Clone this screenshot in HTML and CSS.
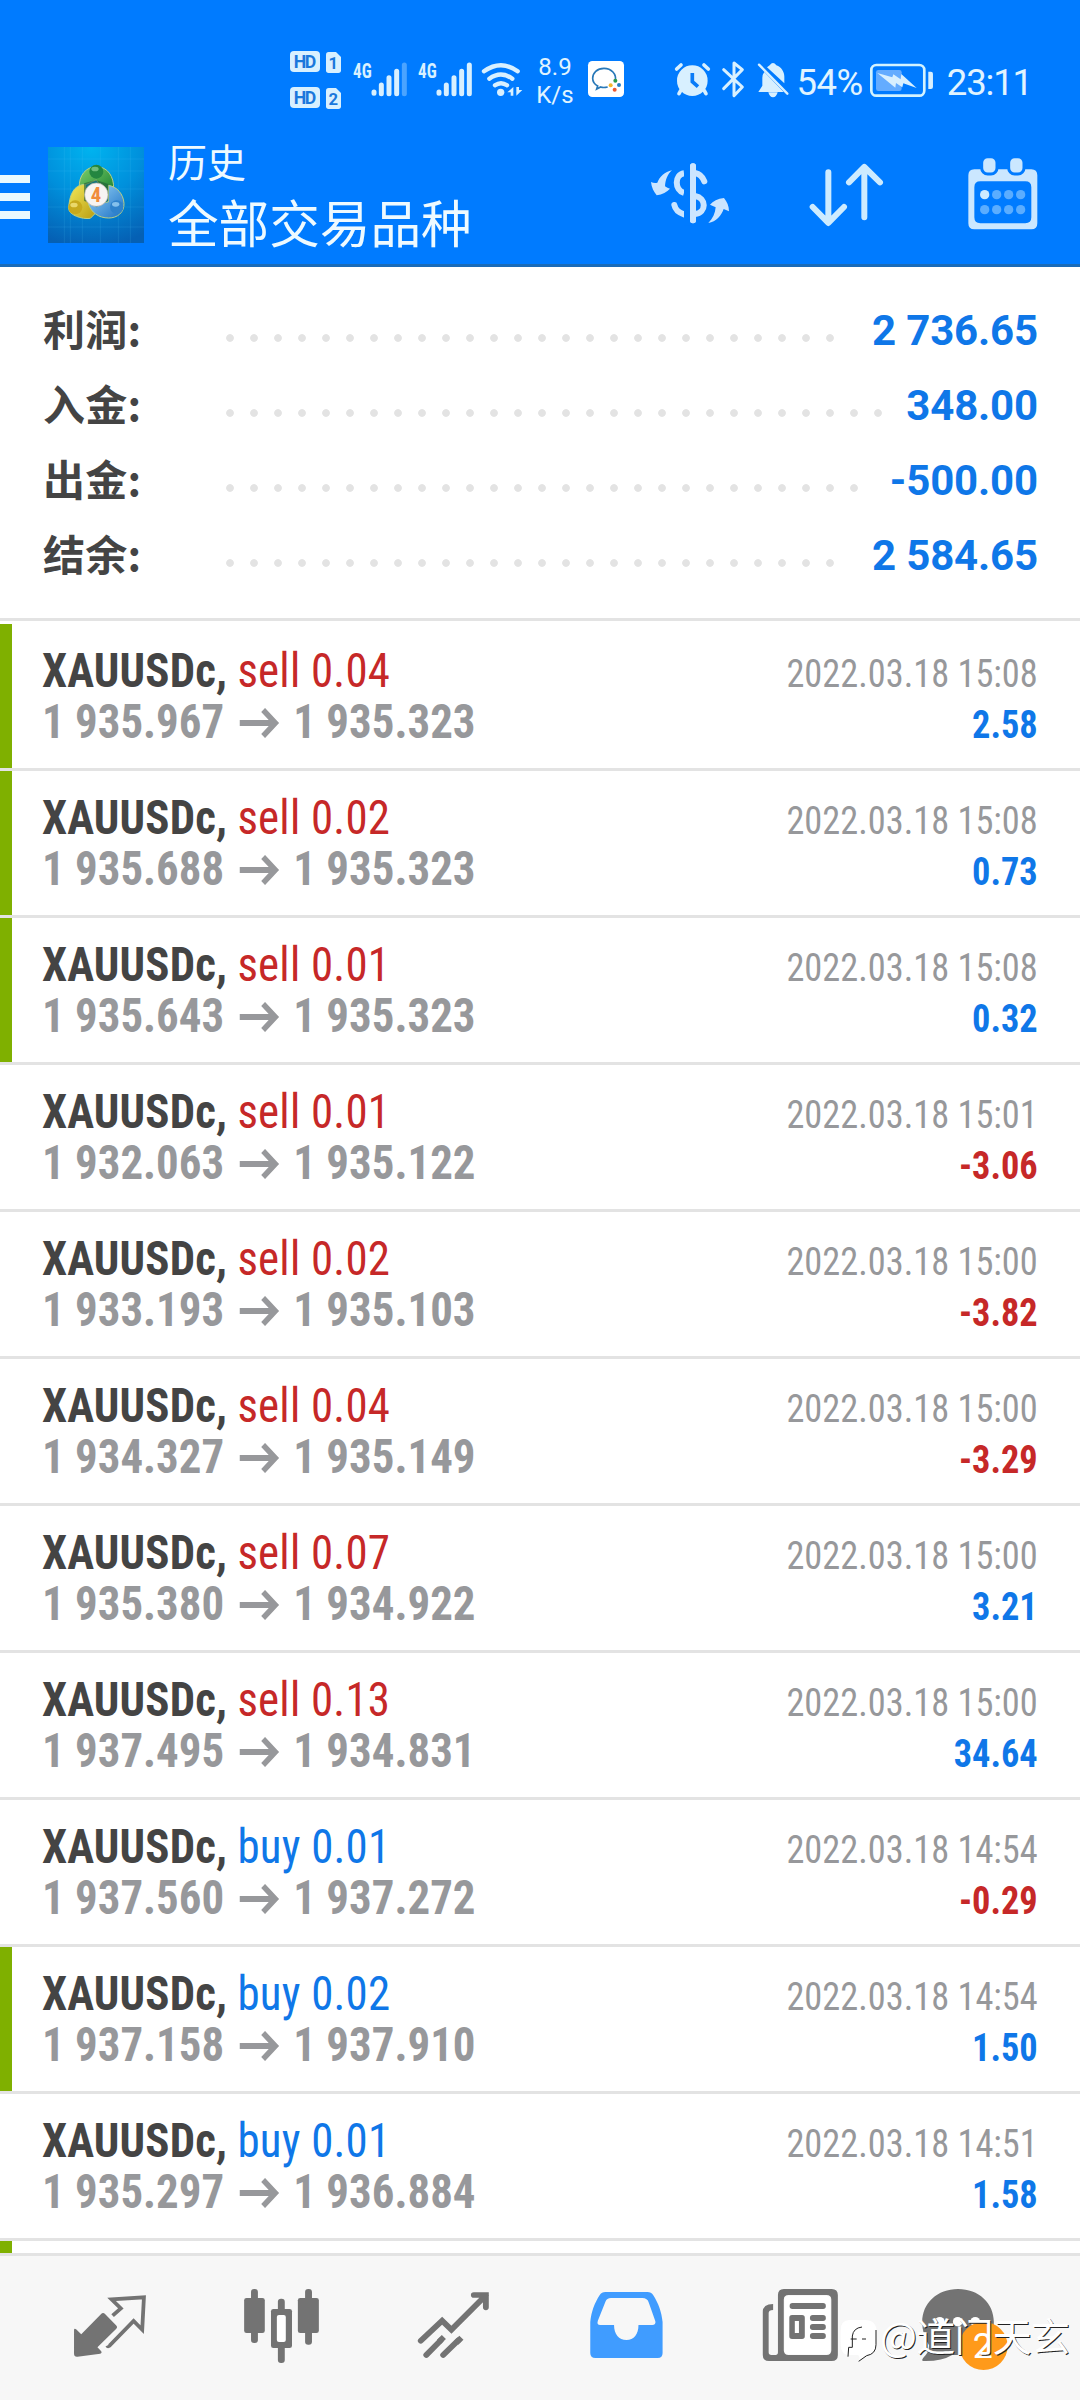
FILE: index.html
```html
<!DOCTYPE html>
<html lang="zh-CN">
<head>
<meta charset="utf-8">
<title>历史</title>
<link rel="stylesheet" href="styles.css">
</head>
<body>
<div class="screen">
  <div class="statusbar">
    <svg class="st st-hd" viewBox="60 30 153 225">
      <g class="ice"><rect x="60" y="63" width="90" height="63" rx="12"/><path d="M176 66h22l15 15v40q0 8-8 8h-29q-8 0-8-8V74q0-8 8-8z"/>
      <rect x="60" y="171" width="90" height="63" rx="12"/><path d="M176 174h22l15 15v40q0 8-8 8h-29q-8 0-8-8v-47q0-8 8-8z"/></g>
      <g class="cut"><text x="105" y="114" textLength="68">HD</text><text x="105" y="222" textLength="68">HD</text><text x="190" y="117" class="num">1</text><text x="190" y="225" class="num">2</text></g>
    </svg>
    <svg class="st st-sig" viewBox="248 30 162 225">
      <text class="gen" x="248" y="143" textLength="56" lengthAdjust="spacingAndGlyphs">4G</text>
      <g class="bars"><path d="M311 186v4M333 165v26M356 143v48M379 124v67"/><path opacity=".35" d="M402 105v86"/></g>
    </svg>
    <svg class="st st-sig2" viewBox="443 30 162 225">
      <text class="gen" x="443" y="143" textLength="56" lengthAdjust="spacingAndGlyphs">4G</text>
      <g class="bars"><path d="M506 186v4M528 165v26M551 143v48M574 124v67M597 105v86"/></g>
    </svg>
    <svg class="st st-wifi" viewBox="632 30 126 225">
      <g class="lines" stroke-width="13"><path d="M641 124q51-36 101 0M657 146q35-25 69 0M674 166q18-13 36 0"/></g>
      <circle class="ice" cx="691" cy="187" r="11"/>
      <path class="ice" d="M729 171v26h-8v-10h-10zM738 171v26l18-17h-10v-9z"/>
    </svg>
    <div class="speed">8.9<br>K/s</div>
    <svg class="st st-chat" viewBox="954 30 108 225">
      <rect x="954" y="93" width="108" height="108" rx="13" fill="#fff"/>
      <path d="M1036 152c4-20-12-37-34-37-21 0-34 14-34 30 0 12 7 19 15 23l-3 9 12-6q8 3 21 0" fill="none" stroke="#2878b8" stroke-width="5"/>
      <circle cx="1036" cy="152" r="6" fill="#2b9a4a"/><circle cx="1047" cy="165" r="6" fill="#277fc8"/><circle cx="1034" cy="179" r="6" fill="#ee5a32"/><circle cx="1022" cy="166" r="6" fill="#f5b82c"/>
    </svg>
    <svg class="st st-alarm" viewBox="75 30 106 225">
      <circle class="ice" cx="127" cy="152" r="46"/>
      <g class="lines" stroke-width="11"><path d="M80 117l13-12M175 117l-13-12M92 182l-5 9M163 182l5 9"/></g>
      <path d="M127 129v26l17 15" fill="none" stroke="#0a7cf8" stroke-width="11"/>
    </svg>
    <svg class="st st-bt" viewBox="215 30 68 225">
      <path class="lines" stroke-width="9" stroke-linejoin="round" d="M220 119l56 52-25 26V99l25 20-56 57"/>
    </svg>
    <svg class="st st-bell" viewBox="320 30 96 225">
      <path class="ice" d="M342 126l58 60h-76l12-19v-24q0-10 6-17zM350 112l8-6q10-14 20 0c15 5 24 20 24 34v20zM354 187h28q-4 15-14 15t-14-15z"/>
      <path class="lines" stroke-width="7" d="M326 104l85 87"/>
    </svg>
    <span class="pct">54%</span>
    <svg class="st st-batt" viewBox="666 30 190 225">
      <rect x="670" y="105" width="159" height="92" rx="15" fill="none" stroke="#d3f3ff" stroke-width="8"/>
      <rect x="684" y="120" width="77" height="63" rx="7" fill="#64acff"/>
      <path class="ice" d="M688 129l45 13 3-9 22 15 2-16 46 42-40-14-3 12-19-13-2 14zM841 125h8q6 0 6 6v40q0 6-6 6h-8z"/>
    </svg>
    <span class="clock">23:11</span>
  </div>

  <div class="appbar">
    <svg class="menu" viewBox="0 0 30 44"><path fill="#eaf9ff" d="M0 0h30v8H0zM0 18h30v8H0zM0 36h30v8H0z"/></svg>
    <svg class="logo" viewBox="144 51 288 288">
      <defs>
        <radialGradient id="bg" cx=".45" cy="0" r="1.05"><stop offset="0" stop-color="#00b4f0"/><stop offset=".5" stop-color="#0090dc"/><stop offset="1" stop-color="#0560b4"/></radialGradient>
        <linearGradient id="gr" x1="0" y1="0" x2="1" y2="1"><stop offset="0" stop-color="#7fd06a"/><stop offset="1" stop-color="#0f7a2c"/></linearGradient>
        <linearGradient id="ye" x1="0" y1="0" x2="1" y2="1"><stop offset="0" stop-color="#f4ea5a"/><stop offset="1" stop-color="#b79a10"/></linearGradient>
        <linearGradient id="bl" x1="0" y1="0" x2="1" y2="1"><stop offset="0" stop-color="#9ad6f8"/><stop offset="1" stop-color="#1a6fc4"/></linearGradient>
      </defs>
      <rect x="144" y="51" width="288" height="288" fill="url(#bg)"/>
      <path d="M193 51v288M211 51v288M247 51v288M301 51v288M355 51v288M391 51v288M144 87h288M144 123h288M144 177h288M144 231h288M144 291h288" stroke="#5cc8f5" stroke-opacity=".22" stroke-width="2"/>
      <g stroke="#b9cf86" stroke-width="3">
        <path d="M238 172c-2-35 20-62 51-62 34 0 53 30 52 66-1 14-7 25-12 28l-40-54z" fill="url(#gr)"/>
        <path d="M256 163c-28 1-47 20-50 72 0 20 40 34 65 30l22-22-34-60z" fill="url(#ye)"/>
        <path d="M325 166c26 4 45 26 47 54 1 28-20 44-46 44-30 0-52-16-61-43l60-5z" fill="url(#bl)"/>
      </g>
      <path d="M252 160l36-10 37 12v50l-35 20-38-20z" fill="#205c38" opacity=".6"/>
      <circle cx="289" cy="125" r="21" fill="#238640"/><ellipse cx="285" cy="117" rx="11" ry="7" fill="#82c98c" opacity=".8"/>
      <circle cx="226" cy="232" r="21" fill="#c7a91c"/><ellipse cx="222" cy="225" rx="11" ry="7" fill="#f2e37e" opacity=".8"/>
      <circle cx="350" cy="231" r="20" fill="#2e82cc"/><ellipse cx="347" cy="223" rx="11" ry="7" fill="#9ad0f4" opacity=".8"/>
      <circle cx="289" cy="194" r="35" fill="#f7f4f2" stroke="#b9b4ae" stroke-width="2"/>
      <text x="288" y="216" class="four">4</text>
    </svg>
    <div class="titles"><div class="sub">历史</div><div class="main">全部交易品种</div></div>
    <svg class="act-cur" viewBox="90 80 240 220">
      <g fill="none" stroke="#cbe5ff" stroke-width="18"><path d="M219 108v162M163 224q4 20 29 28" stroke-linecap="round"/><path d="M192 129c-29 4-29 50 0 59"/><path d="M225 128q20 4 28 25" stroke-linecap="round"/><path d="M225 197c35 6 35 50 0 54"/></g>
      <path d="M201 95v190" stroke="#007bff" stroke-width="18"/><path d="M219 108v162" stroke="#cbe5ff" stroke-width="18" stroke-linecap="round"/>
      <path fill="#cbe5ff" d="M156 120c-14 12-20 30-21 48q7 6 15 7c-9 10-23 18-40 20-8-10-16-24-17-40q9 4 19 2c7-18 22-33 44-37zM265 278c13-13 21-29 22-47l-17-8c9-10 23-18 42-20 9 11 15 24 15 40l-16-7c-7 19-22 39-46 42z"/>
    </svg>
    <svg class="act-sort" viewBox="560 80 240 220">
      <path fill="none" stroke="#cdebff" stroke-width="18" stroke-linecap="round" stroke-linejoin="round" d="M624 126v150M577 230l47 48 47-48M732 261V112M686 156l46-46 47 46"/>
    </svg>
    <svg class="act-cal" viewBox="1040 80 216 220">
      <path fill="#cbe7ff" fill-rule="evenodd" d="M1062 117h171q18 0 18 18v144q0 18-18 18h-171q-18 0-18-18V135q0-18 18-18zM1080 153q-18 0-18 18v90q0 18 18 18h135q18 0 18-18v-90q0-18-18-18z"/>
      <g fill="#cbe7ff" stroke="#007bff" stroke-width="9"><rect x="1084" y="79" width="46" height="52" rx="18"/><rect x="1165" y="79" width="46" height="52" rx="18"/></g>
      <circle cx="1093" cy="193" r="14" fill="#cdeaff"/>
      <g fill="#5badff"><circle cx="1129" cy="193" r="14"/><circle cx="1165" cy="193" r="14"/><circle cx="1201" cy="193" r="14"/><circle cx="1093" cy="238" r="14"/><circle cx="1129" cy="238" r="14"/><circle cx="1165" cy="238" r="14"/><circle cx="1201" cy="238" r="14"/></g>
    </svg>
  </div>

  <div class="summary">
    <div class="sum"><span class="label">利润:</span><i class="dots"></i><b>2 736.65</b></div>
    <div class="sum"><span class="label">入金:</span><i class="dots"></i><b>348.00</b></div>
    <div class="sum"><span class="label">出金:</span><i class="dots"></i><b>-500.00</b></div>
    <div class="sum"><span class="label">结余:</span><i class="dots"></i><b>2 584.65</b></div>
  </div>

  <svg width="0" height="0" class="defs"><symbol id="arr" viewBox="0 0 42 30"><path d="M0 15h38M25 2l13 13-13 13" fill="none" stroke="#97989b" stroke-width="5.8"/></symbol></svg>

  <div class="deals">
    <div class="deal tp"><div class="l"><div><b>XAUUSDc,</b> <span class="sell">sell 0.04</span></div><div class="px">1 935.967<svg><use href="#arr"/></svg>1 935.323</div></div><div class="r"><div>2022.03.18 15:08</div><div class="pos">2.58</div></div></div>
    <div class="deal tp"><div class="l"><div><b>XAUUSDc,</b> <span class="sell">sell 0.02</span></div><div class="px">1 935.688<svg><use href="#arr"/></svg>1 935.323</div></div><div class="r"><div>2022.03.18 15:08</div><div class="pos">0.73</div></div></div>
    <div class="deal tp"><div class="l"><div><b>XAUUSDc,</b> <span class="sell">sell 0.01</span></div><div class="px">1 935.643<svg><use href="#arr"/></svg>1 935.323</div></div><div class="r"><div>2022.03.18 15:08</div><div class="pos">0.32</div></div></div>
    <div class="deal"><div class="l"><div><b>XAUUSDc,</b> <span class="sell">sell 0.01</span></div><div class="px">1 932.063<svg><use href="#arr"/></svg>1 935.122</div></div><div class="r"><div>2022.03.18 15:01</div><div class="neg">-3.06</div></div></div>
    <div class="deal"><div class="l"><div><b>XAUUSDc,</b> <span class="sell">sell 0.02</span></div><div class="px">1 933.193<svg><use href="#arr"/></svg>1 935.103</div></div><div class="r"><div>2022.03.18 15:00</div><div class="neg">-3.82</div></div></div>
    <div class="deal"><div class="l"><div><b>XAUUSDc,</b> <span class="sell">sell 0.04</span></div><div class="px">1 934.327<svg><use href="#arr"/></svg>1 935.149</div></div><div class="r"><div>2022.03.18 15:00</div><div class="neg">-3.29</div></div></div>
    <div class="deal"><div class="l"><div><b>XAUUSDc,</b> <span class="sell">sell 0.07</span></div><div class="px">1 935.380<svg><use href="#arr"/></svg>1 934.922</div></div><div class="r"><div>2022.03.18 15:00</div><div class="pos">3.21</div></div></div>
    <div class="deal"><div class="l"><div><b>XAUUSDc,</b> <span class="sell">sell 0.13</span></div><div class="px">1 937.495<svg><use href="#arr"/></svg>1 934.831</div></div><div class="r"><div>2022.03.18 15:00</div><div class="pos">34.64</div></div></div>
    <div class="deal"><div class="l"><div><b>XAUUSDc,</b> <span class="buy">buy 0.01</span></div><div class="px">1 937.560<svg><use href="#arr"/></svg>1 937.272</div></div><div class="r"><div>2022.03.18 14:54</div><div class="neg">-0.29</div></div></div>
    <div class="deal tp"><div class="l"><div><b>XAUUSDc,</b> <span class="buy">buy 0.02</span></div><div class="px">1 937.158<svg><use href="#arr"/></svg>1 937.910</div></div><div class="r"><div>2022.03.18 14:54</div><div class="pos">1.50</div></div></div>
    <div class="deal"><div class="l"><div><b>XAUUSDc,</b> <span class="buy">buy 0.01</span></div><div class="px">1 935.297<svg><use href="#arr"/></svg>1 936.884</div></div><div class="r"><div>2022.03.18 14:51</div><div class="pos">1.58</div></div></div>
    <div class="deal tp peek"></div>
  </div>

  <div class="tabs">
    <svg viewBox="69.7 108 499.5 432" preserveAspectRatio="none">
      <path fill="#737373" d="M215 331q0-7 6-3l15 15 57-60q6-7 12-1l32 34q6 6 0 11l-54 55 11 12q3 6-3 7l-66 9q-10 1-10-9z"/>
      <path fill="none" stroke="#737373" stroke-width="11" d="M327 287l24-22-27-27 94-6-5 97-25-26-68 72q-6 7-9 2"/>
    </svg>
    <svg viewBox="569.2 108 499.5 432" preserveAspectRatio="none">
      <g fill="#737373"><rect x="729" y="207" width="20" height="162" rx="9"/><rect x="709" y="234" width="60" height="105" rx="7"/><rect x="807" y="236" width="20" height="193" rx="9"/><rect x="787" y="267" width="61" height="117" rx="7"/><rect x="886" y="207" width="20" height="167" rx="9"/><rect x="865" y="234" width="61" height="105" rx="7"/></g>
      <rect x="804" y="285" width="26" height="81" rx="6" fill="#fff"/>
    </svg>
    <svg viewBox="1068.7 108 499.5 432" preserveAspectRatio="none">
      <g fill="none" stroke="#737373" stroke-width="17" stroke-linecap="round"><path d="M1222 362l62-60 27 27 100-103M1376 225h35v37"/><path d="M1238 405l42-44M1287 405l44-44"/></g>
      <path fill="none" stroke="#737373" stroke-width="17" d="M1275 365l14-14M1325 368l15-15"/>
    </svg>
    <svg viewBox="0 108 499.5 432" preserveAspectRatio="none">
      <path fill="#409cff" fill-rule="evenodd" d="M190 216h122q11 0 17 10c15 25 24 49 27 80v93q0 15-14 15H161q-15 0-15-15v-93c3-31 12-55 27-80q6-10 17-10zM206 234q-12 0-16 11l-22 57q-4 13 7 13h40c0 28 14 45 36 45s35-17 35-45h40q11 0 9-11l-19-56q-4-14-19-14z"/>
    </svg>
    <svg viewBox="499.5 108 499.5 432" preserveAspectRatio="none">
      <path fill="#737373" fill-rule="evenodd" d="M708 207h139q18 0 18 18v180q0 18-18 18H665q-18 0-18-18V276q0-24 30-24v18q-13 0-13 9v118q0 8 8 8h12q7 0 7-8V225q0-18 17-18zM722 225q-14 0-14 14v152q0 14 14 14h110q14 0 14-14V239q0-14-14-14z"/>
      <path fill="#fff" d="M722 228h110q11 0 11 11v152q0 12-11 12H722q-12 0-12-12V239q0-11 12-11z"/>
      <g fill="#737373"><rect x="725" y="249" width="105" height="18" rx="8"/><rect x="784" y="285" width="46" height="18" rx="8"/><rect x="784" y="312" width="46" height="18" rx="8"/><rect x="784" y="339" width="46" height="18" rx="8"/><path fill-rule="evenodd" d="M732 285h29q8 0 8 8v56q0 8-8 8h-29q-8 0-8-8v-56q0-8 8-8zM740 303v36h12v-36z"/></g>
    </svg>
    <svg viewBox="999 108 499.5 432" preserveAspectRatio="none">
      <path fill="#737373" d="M1214 207c60 0 104 42 104 99s-44 99-104 99h-17q-30 19-82 18c-8 0-5-6 0-12 10-10 14-18 15-35q-20-30-20-70c0-57 44-99 104-99z"/>
      <g fill="#fff"><circle cx="1161" cy="305" r="14"/><circle cx="1213" cy="305" r="14"/><circle cx="1264" cy="305" r="14"/></g>
      <ellipse cx="1288" cy="378" rx="70" ry="72" fill="#ff9a1a"/>
      <text class="badge" x="1286" y="414">2</text>
    </svg>
  </div>

  <div class="watermark">
    <svg viewBox="0 0 114 135">
      <path fill="#fff" d="M28 0h46q36 0 36 36v32q0 30-26 36l-8 1q-8 10-18 17 2-14-4-17H30Q2 105 2 74V32Q2 0 28 0z"/>
      <path fill="none" stroke="#222" stroke-width="3" d="M26 82H37V48Q40 24 66 21M32 57h18M66 57h12M108 30v44q0 28-28 33l-24 17M26 82l-2 28"/>
    </svg><span>@道门天玄</span>
  </div>
</div>
</body>
</html>
```
FILE: styles.css
```css
* { box-sizing: border-box; }
body { margin: 0; background: #fff; font-family: Roboto, "Noto Sans CJK SC", sans-serif; }
.screen { position: relative; width: 1080px; height: 2400px; overflow: hidden; display: flex; flex-direction: column; background: #fff; }
.defs { position: absolute; }

.statusbar { height: 130px; padding: 40px 0 0 290px; background: #007bff; display: flex; align-items: flex-start; color: #e0f4ff; white-space: nowrap; }
.st { height: 75px; flex: none; overflow: visible; }
.ice { fill: #d8f0ff; }
.lines { fill: none; stroke: #d8f0ff; stroke-linecap: round; }
.bars { fill: none; stroke: #d8f0ff; stroke-width: 15; stroke-linecap: round; }
.cut { fill: #1a78dc; font: 700 53px Roboto; text-anchor: middle; }
.num { font-size: 50px; }
.gen { fill: #d8f0ff; font: 700 62px "Roboto Condensed", Roboto; }
.st-hd { width: 51px; }
.st-sig { width: 54px; margin-left: 11.7px; }
.st-sig2 { width: 54px; margin-left: 11px; }
.st-wifi { width: 42px; margin-left: 9px; }
.speed { width: 46px; margin: 13px 0 0 9.3px; font-size: 24px; line-height: 28px; text-align: center; }
.st-chat { width: 36px; margin-left: 10px; }
.st-alarm { width: 35.3px; margin-left: 51px; }
.st-bt { width: 22.7px; margin-left: 11.3px; }
.st-bell { width: 32px; margin-left: 12.3px; }
.pct { width: 67px; margin: 22px 0 0 8px; font-size: 36.5px; line-height: 42px; letter-spacing: -.5px; }
.st-batt { width: 63.3px; margin-left: 6px; }
.clock { margin: 22px 0 0 14px; font-size: 36.5px; line-height: 42px; letter-spacing: -1.2px; }

.appbar { height: 137px; background: #007bff; border-bottom: 3px solid #1a6bb8; display: flex; align-items: flex-start; color: #eefaff; }
.menu { width: 30px; height: 44px; margin-top: 45px; }
.logo { width: 96px; height: 96px; margin: 17px 24px 0 18px; }
.four { font: 700 62px "Roboto Condensed", Roboto; fill: #f08c3c; text-anchor: middle; }
.titles { width: 482px; padding-top: 6px; }
.sub { font-size: 39px; line-height: 56px; }
.main { font-size: 50.6px; line-height: 68px; }
.act-cur, .act-sort { width: 80px; height: 73.3px; margin-top: 26.7px; }
.act-sort { margin-left: 76.7px; }
.act-cal { width: 72px; height: 73.3px; margin: 26.7px 0 0 80px; overflow: visible; }

.summary { height: 354px; padding: 26px 42px 0 43px; border-bottom: 3px solid #e3e3e3; }
.sum { height: 75px; display: flex; align-items: center; font-size: 42px; color: #0f77e8; }
.sum b { letter-spacing: -.15px; }
.label { width: 175px; padding-bottom: 5px; font-family: "Noto Sans CJK SC", sans-serif; font-weight: 700; color: #444; line-height: 70px; letter-spacing: .3px; }
.dots { flex: 1; height: 8px; margin: 14px 23px 0 0; background: radial-gradient(circle at 12px 4px, #e3e3e3 3.4px, transparent 4.3px) 0 0 / 24px 8px repeat-x; }

.deals { height: 1632px; padding-top: 3px; overflow: hidden; }
.deal { height: 147px; padding: 0 42px; border-bottom: 3px solid #e3e3e3; display: flex; justify-content: space-between; font-family: "Roboto Condensed", Roboto, sans-serif; line-height: 51px; white-space: nowrap; }
.tp { background: linear-gradient(#7fb000, #7fb000) left top / 12px 100% no-repeat; }
.peek { height: 12px; border: 0; }
.l { padding-top: 21px; font-size: 48px; transform: scaleX(.935); transform-origin: 0 0; }
.l b { color: #444; letter-spacing: .15px; }
.l div { height: 51px; }
.px { font-weight: 700; color: #97989b; }
.px svg { width: 45px; height: 30px; margin: 0 14px 0 15px; vertical-align: 0; }
.r { padding-top: 25px; font-size: 39.3px; text-align: right; color: #97989b; transform: scaleX(.925); transform-origin: 100% 0; }
.pos, .neg { font-weight: 700; color: #0f77e8; }
.neg { color: #c62828; }
.sell { color: #c62828; letter-spacing: .25px; }
.buy { color: #0f77e8; letter-spacing: .25px; }

.tabs { height: 147px; border-top: 3px solid #e3e3e3; background: #f7f7f7; padding-left: 24px; display: flex; }
.tabs svg { width: 172px; height: 144px; flex: none; }
.badge { fill: #fff; font: 400 104px Roboto; text-anchor: middle; }

.watermark { position: absolute; left: 840px; top: 2320px; display: flex; align-items: flex-start; color: #fff; font: 39px/52px "Noto Sans CJK SC", sans-serif; text-shadow: 1px 1px 0 #222; white-space: nowrap; }
.watermark svg { width: 38px; height: 45px; margin-right: 2px; }
.watermark span { margin-top: -12px; letter-spacing: -.7px; }
```
